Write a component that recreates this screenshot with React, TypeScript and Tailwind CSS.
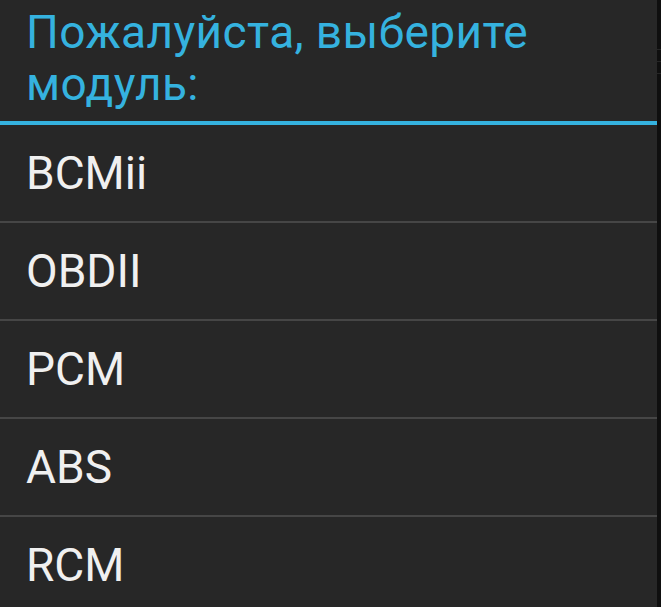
import React from "react";

const MODULES = ["BCMii", "OBDII", "PCM", "ABS", "RCM"];

export default function App() {
  return (
    <div
      className="flex h-[607px] w-[661px] overflow-hidden bg-[#0f0f0f]"
      style={{ fontFamily: "Roboto, 'Noto Sans', sans-serif" }}
    >
      <div className="flex w-[657px] shrink-0 flex-col bg-[#272727]">
        {/* title */}
        <div className="h-[121px] shrink-0 px-[26px] pt-[6px] text-[46px] leading-[52px] tracking-[0.4px] text-[#35b2df]">
          Пожалуйста, выберите
          <br />
          модуль:
        </div>
        <div className="h-[4px] shrink-0 bg-[#35b2df]" />

        {/* list */}
        <ul className="flex shrink-0 flex-col">
          {MODULES.map((name, i) => (
            <li key={name} className="flex shrink-0 flex-col">
              {i > 0 && <div className="h-[2px] shrink-0 bg-[#464646]" />}
              <div className="flex h-[96px] shrink-0 items-center px-[26px] text-[46px] text-[#f0f0f0]">
                {name}
              </div>
            </li>
          ))}
        </ul>
      </div>

      {/* right edge strip */}
      <div className="flex w-[4px] shrink-0 flex-col">
        <div className="h-[49px]" />
        <div className="h-[1px] bg-[#262626]" />
        <div className="h-[11px]" />
        <div className="h-[1px] bg-[#262626]" />
        <div className="h-[11px]" />
        <div className="h-[1px] bg-[#262626]" />
      </div>
    </div>
  );
}
